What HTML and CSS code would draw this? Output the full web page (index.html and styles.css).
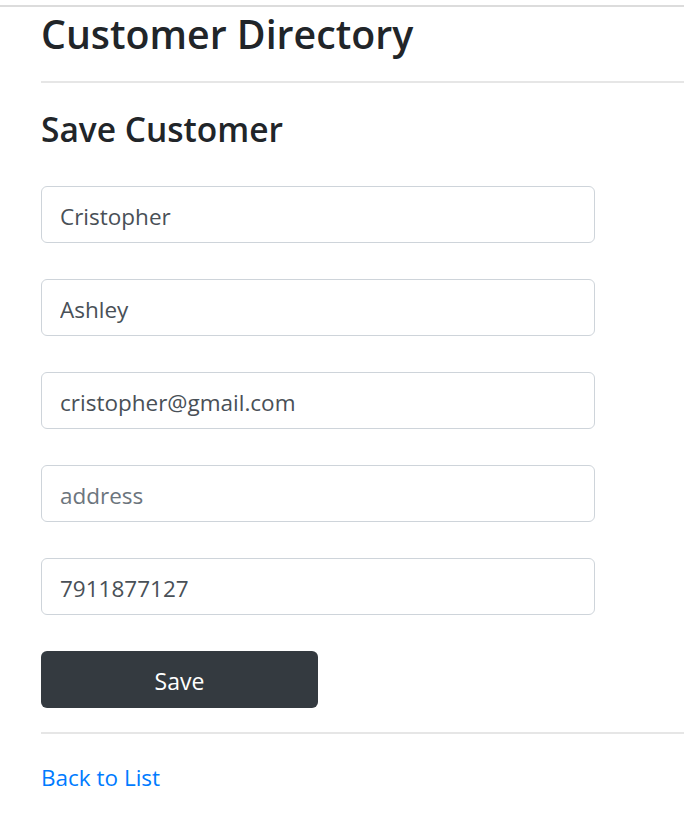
FILE: index.html
```html
<!DOCTYPE html>
<html lang="en">
<head>
<meta charset="utf-8">
<title>Customer Directory</title>
<link rel="stylesheet" href="styles.css">
</head>
<body>
<div class="topbar"></div>
<main class="container">
  <h1 class="title">Customer Directory</h1>
  <hr class="rule">
  <h2 class="subtitle">Save Customer</h2>
  <form class="form">
    <div class="group"><input class="field" type="text" value="Cristopher" placeholder="first name"></div>
    <div class="group"><input class="field" type="text" value="Ashley" placeholder="last name"></div>
    <div class="group"><input class="field" type="text" value="cristopher@gmail.com" placeholder="email"></div>
    <div class="group"><input class="field" type="text" value="" placeholder="address"></div>
    <div class="group"><input class="field" type="text" value="7911877127" placeholder="phone"></div>
    <button class="btn" type="button">Save</button>
  </form>
  <hr class="rule rule-bottom">
  <a class="back" href="#">Back to List</a>
</main>
</body>
</html>
```
FILE: styles.css
```css
html, body {
  margin: 0;
  padding: 0;
  background: #fff;
}
body {
  font-family: "Open Sans", "Noto Sans", "Liberation Sans", sans-serif;
  color: #212529;
  width: 684px;
  overflow: hidden;
}
.topbar {
  height: 5px;
  border-bottom: 2px solid #dcdcdc;
}
.container {
  padding-left: 41px;
}
.title {
  margin: 0;
  padding-top: 2px;
  font-weight: 600;
  font-size: 39.3px;
  line-height: 50px;
  height: 50px;
  letter-spacing: 0;
}
.rule {
  margin: 22px 0 0 0;
  border: 0;
  border-top: 2px solid #e6e6e6;
  height: 0;
}
.subtitle {
  margin: 0;
  padding-top: 23px;
  font-weight: 600;
  font-size: 33.5px;
  line-height: 46px;
  height: 46px;
  letter-spacing: 0;
}
.form {
  margin-top: 34px;
  display: flex;
  flex-direction: column;
}
.group {
  margin-bottom: 36px;
}
.field {
  box-sizing: border-box;
  display: block;
  width: 554px;
  height: 57px;
  padding: 3px 18px 0 18px;
  border: 1.5px solid #ced4da;
  border-radius: 6px;
  font-family: inherit;
  font-size: 22.5px;
  color: #495057;
  background: #fff;
  outline: none;
}
.field::placeholder {
  color: #6c757d;
}
.btn {
  box-sizing: border-box;
  width: 277px;
  height: 57px;
  border: 0;
  border-radius: 6px;
  background: #343a40;
  color: #fff;
  font-family: inherit;
  font-size: 23px;
  padding: 3px 0 0 0;
  cursor: pointer;
}
.rule-bottom {
  margin-top: 24px;
}
.back {
  display: inline-block;
  margin-top: 28px;
  font-size: 22.5px;
  color: #007bff;
  text-decoration: none;
}
```
